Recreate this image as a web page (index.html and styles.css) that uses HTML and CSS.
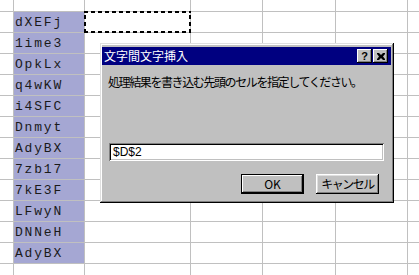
FILE: index.html
```html
<!DOCTYPE html>
<html>
<head>
<meta charset="utf-8">
<link rel="stylesheet" href="styles.css">
</head>
<body>
<div class="sheet">
	<div></div><div></div><div></div><div></div><div></div><div></div><div></div>
	<div></div><div class="sel">dXEFj</div><div class="ants"></div><div></div><div></div><div></div><div></div>
	<div></div><div class="sel">1ime3</div><div></div><div></div><div></div><div></div><div></div>
	<div></div><div class="sel">OpkLx</div><div></div><div></div><div></div><div></div><div></div>
	<div></div><div class="sel">q4wKW</div><div></div><div></div><div></div><div></div><div></div>
	<div></div><div class="sel">i4SFC</div><div></div><div></div><div></div><div></div><div></div>
	<div></div><div class="sel">Dnmyt</div><div></div><div></div><div></div><div></div><div></div>
	<div></div><div class="sel">AdyBX</div><div></div><div></div><div></div><div></div><div></div>
	<div></div><div class="sel">7zb17</div><div></div><div></div><div></div><div></div><div></div>
	<div></div><div class="sel">7kE3F</div><div></div><div></div><div></div><div></div><div></div>
	<div></div><div class="sel">LFwyN</div><div></div><div></div><div></div><div></div><div></div>
	<div></div><div class="sel">DNNeH</div><div></div><div></div><div></div><div></div><div></div>
	<div></div><div class="sel">AdyBX</div><div></div><div></div><div></div><div></div><div></div>
	<div></div><div></div><div></div><div></div><div></div><div></div><div></div>
</div>

<div class="dialog">
	<div class="titlebar">
		<span class="title">文字間文字挿入</span>
		<span class="capbtn help">?</span>
		<span class="capbtn close">
			<svg width="8" height="7" viewBox="0 0 8 7"><path d="M0 0h2l2 2 2-2h2v1l-2 2.5 2 2.5v1h-2l-2-2-2 2h-2v-1l2-2.5-2-2.5z" fill="#000"/></svg>
		</span>
	</div>
	<div class="body">
		<p class="msg">処理結果を書き込む先頭のセルを指定してください。</p>
		<div class="field">$D$2</div>
		<div class="actions">
			<button class="btn default">OK</button>
			<button class="btn">キャンセル</button>
		</div>
	</div>
</div>
</body>
</html>
```

FILE: styles.css
```css
html, body {
	margin:0;
	padding:0;
}
body {
	position:relative;
	width:419px;
	height:275px;
	overflow:hidden;
	background:#fff;
	font-family:"Noto Sans CJK JP", "Liberation Sans", sans-serif;
}
.sheet {
	display:grid;
	grid-template-columns:13px 70px 105px 71px 72px 71px 1fr;
	grid-template-rows:11px repeat(12, 20px) 11px;
	gap:1px;
	width:419px;
	height:275px;
	background:#c0c0c0;
}
.sheet div {
	background:#fff;
}
.sheet div.sel {
	background:#a5a7d3;
	font-family:"Liberation Mono", monospace;
	font-size:13px;
	letter-spacing:1.8px;
	line-height:18px;
	padding:2px 0 0 1px;
	color:#1a1a1a;
}
.sheet div.ants {
	position:relative;
}
.ants:after {
	content:"";
	position:absolute;
	left:-1px;
	top:-1px;
	right:-1px;
	bottom:-1px;
	background:
		repeating-linear-gradient(90deg, #000 0 4px, transparent 4px 7px) top left / 100% 2px no-repeat,
		repeating-linear-gradient(90deg, #000 0 4px, transparent 4px 7px) bottom left / 100% 2px no-repeat,
		repeating-linear-gradient(0deg, #000 0 4px, transparent 4px 7px) top left / 2px 100% no-repeat,
		repeating-linear-gradient(0deg, #000 0 4px, transparent 4px 7px) top right / 2px 100% no-repeat;
}

/* dialog */
.dialog {
	position:absolute;
	left:100px;
	top:43px;
	width:294px;
	height:160px;
	box-sizing:border-box;
	padding:4px 3px 3px 2px;
	background:#c0c0c0;
	box-shadow:inset -1px -1px #000, inset 1px 1px #dfdfdf, inset -2px -2px #808080, inset 2px 2px #fff;
	display:flex;
	flex-direction:column;
}
.titlebar {
	display:flex;
	align-items:center;
	height:18px;
	background:#000080;
	padding:0 3px 0 2px;
}
.title {
	flex:1;
	color:#fff;
	font-size:12px;
	line-height:18px;
}
.capbtn {
	display:flex;
	align-items:center;
	justify-content:center;
	width:15px;
	height:14px;
	box-sizing:border-box;
	background:#c0c0c0;
	box-shadow:inset -1px -1px #000, inset 1px 1px #fff, inset -2px -2px #808080;
	font-family:"Liberation Sans", sans-serif;
	font-weight:bold;
	font-size:11px;
	color:#000;
}
.capbtn.close {
	margin-left:1px;
}
.body {
	flex:1;
	padding:0 7px 0 7px;
}
.msg {
	margin:10px 0 0 -1px;
	font-size:12px;
	line-height:14px;
	letter-spacing:-1.4px;
	color:#000;
}
.field {
	margin-top:54px;
	height:18px;
	box-sizing:border-box;
	background:#fff;
	box-shadow:inset 1px 1px #808080, inset -1px -1px #fff, inset 2px 2px #000, inset -2px -2px #c0c0c0;
	padding:0 4px;
	font-family:"Liberation Sans", sans-serif;
	font-size:12px;
	line-height:18px;
	color:#000;
}
.actions {
	display:flex;
	justify-content:flex-end;
	gap:12px;
	margin-top:13px;
	padding-right:5px;
}
.btn {
	width:63px;
	height:20px;
	box-sizing:border-box;
	border:0;
	padding:0;
	background:#c0c0c0;
	box-shadow:inset -1px -1px #000, inset 1px 1px #fff, inset -2px -2px #808080, inset 2px 2px #dfdfdf;
	font-family:"Noto Sans CJK JP", sans-serif;
	font-size:12px;
	line-height:18px;
	letter-spacing:-1.5px;
	color:#000;
}
.btn.default {
	letter-spacing:0;
	box-shadow:inset 0 0 0 1px #000, inset -2px -2px #000, inset 2px 2px #fff, inset -3px -3px #808080;
}
```
